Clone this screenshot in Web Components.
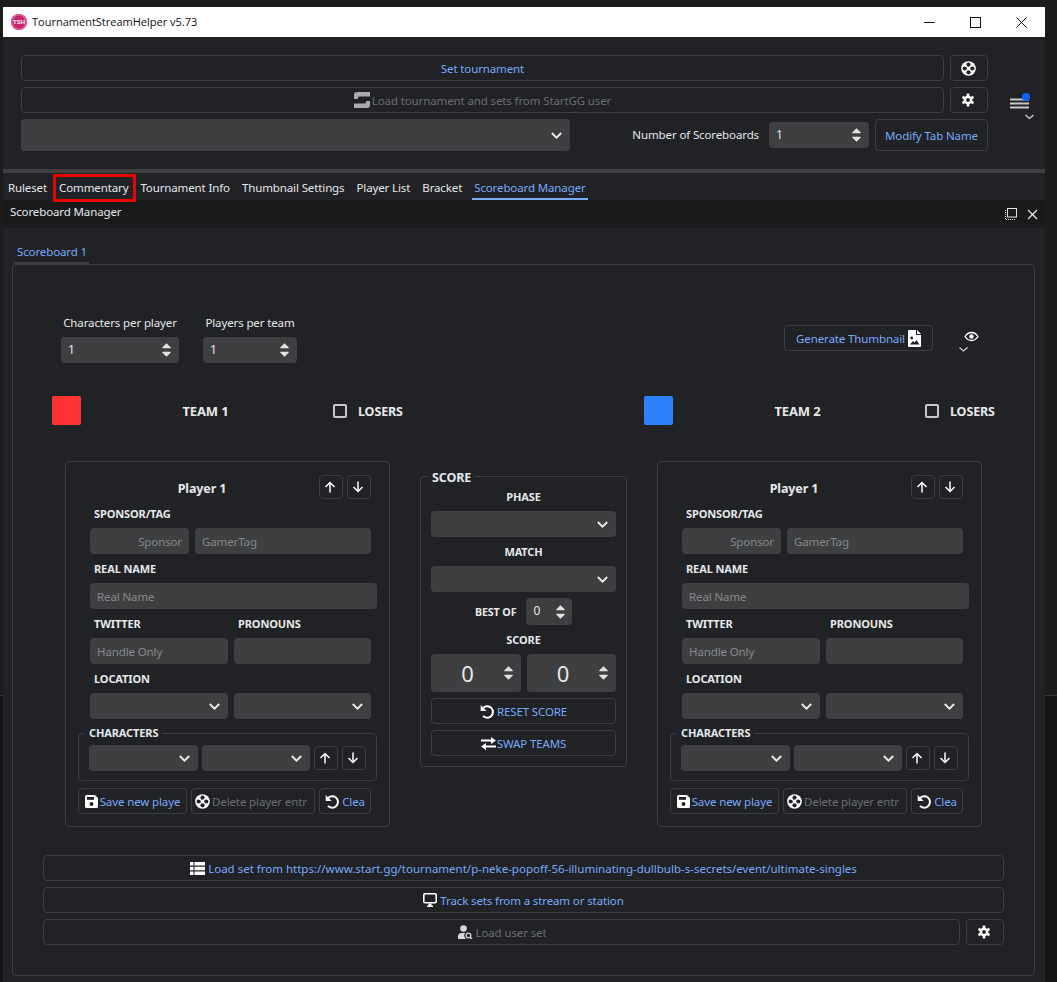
<!DOCTYPE html>
<html>
<head>
<meta charset="utf-8">
<title>TournamentStreamHelper</title>
<style>
    html, body { margin: 0; height: 100%; overflow: hidden; }
    body {
        background: linear-gradient(#1c1c1d 0 695px, #38383a 695px 696px, #141415 696px);
        font: 11.5px/1.2 "Noto Sans", "Liberation Sans", sans-serif;
        letter-spacing: -.12px;
        color: #e6e8ea;
    }
</style>
</head>
<body>
<tsh-window>
    <tsh-titlebar>TournamentStreamHelper v5.73</tsh-titlebar>
    <tsh-toolbar></tsh-toolbar>
    <tsh-tabs></tsh-tabs>
    <tsh-dock-title>Scoreboard Manager</tsh-dock-title>
    <tsh-scoreboard></tsh-scoreboard>
</tsh-window>

<script>
const BG = '#202226';

const ICONS = {
    ring: `<svg width="15" height="15" viewBox="0 0 15 15"><circle cx="7.500" cy="7.500" r="7.300" fill="#fff"/><g fill="${BG}"><circle cx="7.500" cy="3.700" r="2.100"/><circle cx="7.500" cy="11.300" r="2.100"/><circle cx="3.700" cy="7.500" r="2.100"/><circle cx="11.300" cy="7.500" r="2.100"/></g></svg>`,
    gear: `<svg width="14" height="14" viewBox="0 0 14 14"><path d="M7 .6v12.800M1.500 3.800l11 6.400M12.500 3.800l-11 6.400" stroke="#fff" stroke-width="2.600"/><circle cx="7" cy="7" r="4.400" fill="#fff"/><circle cx="7" cy="7" r="1.900" fill="${BG}"/></svg>`,
    startgg: `<svg width="16" height="16" viewBox="0 0 16 16" fill="#a9aaab"><path d="M0 7V3a3 3 0 0 1 3-3h13v4.500H5.500A1.500 1.500 0 0 0 4 6v1z"/><path d="M16 9v4a3 3 0 0 1-3 3H0v-4.500h10.500A1.500 1.500 0 0 0 12 10V9z"/></svg>`,
    save: `<svg width="13" height="13" viewBox="0 0 13 13"><path d="M1.500 0H10l3 3v8.500a1.500 1.500 0 0 1-1.500 1.500h-10A1.500 1.500 0 0 1 0 11.500v-10A1.500 1.500 0 0 1 1.500 0z" fill="#fff"/><rect x="2" y="2" width="7" height="2.800" fill="${BG}"/><circle cx="6.500" cy="9" r="2" fill="${BG}"/></svg>`,
    undo: `<svg width="15" height="15" viewBox="0 0 15 15"><path d="M3.400 3.800A5.700 5.700 0 1 1 3 11.800" fill="none" stroke="#fff" stroke-width="2"/><path d="M.7 1v6h6z" fill="#fff"/></svg>`,
    swap: `<svg width="15" height="13" viewBox="0 0 15 13" fill="#fff"><path d="M0 2.500h10V0l5 3.500L10 7V4.500H0z"/><path d="M15 8.500H5V6L0 9.500 5 13v-2.500h10z"/></svg>`,
    list: `<svg width="15" height="13" viewBox="0 0 15 13" fill="#fff"><path d="M0 0h3.500v3.500H0zM4.500 0H15v3.500H4.500zM0 4.700h3.500v3.500H0zM4.500 4.700H15v3.500H4.500zM0 9.400h3.500v3.500H0zM4.500 9.400H15v3.500H4.500z"/></svg>`,
    desktop: `<svg width="14" height="14" viewBox="0 0 14 14"><rect x=".8" y=".8" width="12.400" height="9" rx="1" fill="none" stroke="#fff" stroke-width="1.600"/><path d="M5.500 10.500h3v2h1.500V14H4v-1.500h1.500z" fill="#fff"/></svg>`,
    usersearch: `<svg width="16" height="14" viewBox="0 0 16 14" fill="#d8d8d8"><circle cx="6.500" cy="3.500" r="3.300"/><path d="M1 14v-2.500A3.500 3.500 0 0 1 4.500 8H8a5 5 0 0 0 1 6z"/><circle cx="11.500" cy="10.500" r="2.300" fill="none" stroke="#d8d8d8" stroke-width="1.300"/><path d="M13 12l2 2" stroke="#d8d8d8" stroke-width="1.500"/></svg>`,
    fileimage: `<svg width="13" height="17" viewBox="0 0 13 17"><path d="M1 0h7v5h5v11a1 1 0 0 1-1 1H1a1 1 0 0 1-1-1V1a1 1 0 0 1 1-1zM9 0l4 4H9z" fill="#fff"/><circle cx="3.700" cy="8" r="1.400" fill="${BG}"/><path d="M2 14.500l3-3.500 1.500 1.500 2-2.500 3 4.500z" fill="${BG}"/></svg>`,
    up: `<svg width="12" height="12" viewBox="0 0 12 12" fill="none" stroke="#fff" stroke-width="1.500"><path d="M6 11.500V1.500M1.500 6L6 1.500 10.500 6"/></svg>`,
    down: `<svg width="12" height="12" viewBox="0 0 12 12" fill="none" stroke="#fff" stroke-width="1.500"><path d="M6 .5v10M1.500 6L6 10.500 10.500 6"/></svg>`
};

class TshElement extends HTMLElement{

    constructor(){
        super();
        this.$ = this.attachShadow({mode: 'open'});
        this.$.innerHTML = `<style>${this.css()}</style>${this.html()}`;
    }

    attr(name, fallback = ''){
        return this.hasAttribute(name) ? this.getAttribute(name) : fallback;
    }

    css(){ return ':host{display:block}' }
    html(){ return '<slot></slot>' }
}

// inputs and buttons share the same sizing through --w / --h on the host

class TshButton extends TshElement{
    css(){
        return `
            :host{
                display:flex;
                align-items:center;
                justify-content:center;
                gap:var(--gap, 2px);
                box-sizing:border-box;
                width:var(--w, auto);
                height:var(--h, 26px);
                flex:none;
                border:1px solid #3c3e42;
                border-radius:4px;
                color:#7aa9f9;
                overflow:hidden;
                white-space:nowrap;
                padding:var(--pad, 0);
            }
            :host([disabled]){ color:#6b6c6f; }
            svg{ flex:none; display:block; }
            span{ overflow:hidden; padding-top:1px; line-height:18px; }
        `;
    }
    html(){
        const icon = ICONS[this.attr('icon')] || '';
        return this.hasAttribute('after')
            ? `<span><slot></slot></span>${icon}`
            : `${icon}<span><slot></slot></span>`;
    }
}
customElements.define('tsh-button', TshButton);

class TshInput extends TshElement{
    css(){
        return `
            :host{
                display:flex;
                align-items:center;
                box-sizing:border-box;
                width:var(--w, auto);
                height:26px;
                flex:none;
                padding:1px 7px 0;
                border-radius:4px;
                background:#3e3f41;
                color:#86888a;
                font-weight:400;
                overflow:hidden;
                white-space:nowrap;
            }
            :host([end]){ justify-content:flex-end; }
        `;
    }
}
customElements.define('tsh-input', TshInput);

class TshCombo extends TshElement{
    css(){
        return `
            :host{
                display:flex;
                align-items:center;
                justify-content:flex-end;
                box-sizing:border-box;
                width:var(--w, auto);
                height:var(--h, 26px);
                flex:none;
                padding-right:8px;
                border-radius:4px;
                background:#3e3f41;
            }
            svg{ display:block; }
        `;
    }
    html(){
        return `<svg width="11" height="7" viewBox="0 0 11 7" fill="none" stroke="#ececec" stroke-width="1.800"><path d="M.8 1l4.700 4.700L10.200 1"/></svg>`;
    }
}
customElements.define('tsh-combo', TshCombo);

class TshSpin extends TshElement{
    css(){
        return `
            :host{
                display:flex;
                align-items:center;
                box-sizing:border-box;
                width:var(--w, auto);
                height:var(--h, 26px);
                flex:none;
                padding:0 7px;
                border-radius:4px;
                background:#3e3f41;
                color:#e6e8ea;
                font-weight:400;
                font-size:var(--size, 12px);
            }
            .value{ flex:1; text-align:var(--align, left); padding-right:var(--value-right, 0); }
            svg{ display:block; flex:none; margin-right:var(--arrow-right, 1px); }
        `;
    }
    html(){
        return `<div class="value"><slot></slot></div>
            <svg width="9" height="14" viewBox="0 0 10 15" fill="#e2e2e2"><path d="M5 0l4.500 4.500a.5.5 0 0 1-.4 1H.9a.5.5 0 0 1-.4-1z"/><path d="M5 15l4.500-4.500a.5.5 0 0 0-.4-1H.9a.5.5 0 0 0-.4 1z"/></svg>`;
    }
}
customElements.define('tsh-spin', TshSpin);

class TshGroup extends TshElement{
    css(){
        return `
            :host{
                display:block;
                position:relative;
                box-sizing:border-box;
                border:1px solid #3c3e42;
                border-radius:4px;
            }
            .legend{
                position:absolute;
                left:var(--legend-left, 6px);
                top:var(--legend-top, -1px);
                transform:translateY(-50%);
                padding:0 4px;
                background:${BG};
                font-weight:700;
                font-size:var(--legend-size, 11px);
            }
        `;
    }
    html(){
        return `<div class="legend">${this.attr('legend')}</div><slot></slot>`;
    }
}
customElements.define('tsh-group', TshGroup);

class TshTitlebar extends TshElement{
    css(){
        return `
            :host{
                display:flex;
                align-items:center;
                height:30px;
                padding-right:1px;
                background:#fff;
                color:#111;
                font-family:"Open Sans", "Noto Sans", sans-serif;
                font-size:11px;
                letter-spacing:0;
            }
            .logo{
                box-sizing:border-box;
                width:16px;
                height:16px;
                margin:0 5px 0 8px;
                border-radius:50%;
                background:#c9256f;
                box-shadow:inset 0 0 0 1.500px #de5f97;
                color:#fff;
                font:700 6px/16px "Liberation Sans", sans-serif;
                text-align:center;
                overflow:hidden;
            }
            .text{ flex:1; }
            .ctl{ width:46px; height:30px; display:flex; align-items:center; justify-content:center; }
        `;
    }
    html(){
        return `
            <div class="logo">TSH</div>
            <div class="text"><slot></slot></div>
            <div class="ctl"><svg width="11" height="11" viewBox="0 0 11 11"><path d="M0 5.500h10.500" stroke="#111"/></svg></div>
            <div class="ctl"><svg width="11" height="11" viewBox="0 0 11 11"><rect x=".5" y=".5" width="10" height="10" fill="none" stroke="#111"/></svg></div>
            <div class="ctl"><svg width="11" height="11" viewBox="0 0 11 11"><path d="M.5.5l10 10M10.500.5l-10 10" stroke="#111"/></svg></div>
        `;
    }
}
customElements.define('tsh-titlebar', TshTitlebar);

class TshToolbar extends TshElement{
    css(){
        return `
            :host{
                display:grid;
                grid-template-columns:967px auto;
                box-sizing:border-box;
                height:136px;
                padding:18px 0 0 18px;
                border-bottom:4px solid #3f4042;
            }
            .rows{ display:grid; grid-template-columns:923px 38px; gap:6px; grid-auto-rows:26px; }
            .last{
                grid-column:1 / 3;
                display:flex;
                align-items:center;
                height:32px;
            }
            .label{ margin-left:auto; margin-right:10px; }
            .menu{ margin:37px 0 0 18px; display:block; }
        `;
    }
    html(){
        return `
            <div class="rows">
                <tsh-button>Set tournament</tsh-button>
                <tsh-button icon="ring"></tsh-button>
                <tsh-button disabled icon="startgg">Load tournament and sets from StartGG user</tsh-button>
                <tsh-button icon="gear"></tsh-button>
                <div class="last">
                    <tsh-combo style="--w:549px;--h:32px"></tsh-combo>
                    <span class="label">Number of Scoreboards</span>
                    <tsh-spin style="--w:100px">1</tsh-spin>
                    <tsh-button style="--w:113px;--h:32px;margin-left:6px">Modify Tab Name</tsh-button>
                </div>
            </div>
            <svg class="menu" width="32" height="32" viewBox="0 0 32 32">
                <path d="M4 7.500h19M4 11.500h19M4 15.500h19" stroke="#c9c9c9" stroke-width="2.200"/>
                <circle cx="20" cy="5" r="4" fill="#0d62ff"/>
                <path d="M19.500 23l4 3.500 4-3.500" fill="none" stroke="#cfcfcf" stroke-width="1.300"/>
            </svg>
        `;
    }
}
customElements.define('tsh-toolbar', TshToolbar);

class TshTabs extends TshElement{
    css(){
        return `
            :host{
                display:flex;
                gap:7px;
                box-sizing:border-box;
                height:27px;
                padding-left:2.500px;
                white-space:nowrap;
            }
            .tab{
                display:flex;
                align-items:center;
                box-sizing:border-box;
                padding:3px 2.500px 0;
                height:27px;
            }
            .on{ color:#7aa9f9; border-bottom:2px solid #7aa9f9; padding-top:5px; }
            .mark{ position:relative; }
            .mark::after{
                content:'';
                position:absolute;
                left:-4px; right:-5px; top:1px; bottom:-2px;
                border:3px solid #f00000;
                border-radius:1px;
                box-sizing:border-box;
            }
        `;
    }
    html(){
        return `
            <div class="tab">Ruleset</div>
            <div class="tab mark">Commentary</div>
            <div class="tab">Tournament Info</div>
            <div class="tab">Thumbnail Settings</div>
            <div class="tab">Player List</div>
            <div class="tab">Bracket</div>
            <div class="tab on">Scoreboard Manager</div>
        `;
    }
}
customElements.define('tsh-tabs', TshTabs);

class TshDockTitle extends TshElement{
    css(){
        return `
            :host{
                display:flex;
                align-items:center;
                justify-content:space-between;
                height:28px;
                padding:0 7px 0 7px;
                box-sizing:border-box;
                background:#191a1c;
                margin-top:0;
            }
            .text{ margin-top:-4px; }
            .btns{ display:flex; gap:10px; align-items:center; }
            svg{ display:block; }
        `;
    }
    html(){
        return `
            <div class="text"><slot></slot></div>
            <div class="btns">
                <svg width="12" height="12" viewBox="0 0 12 12" fill="none" stroke="#e2e2e2"><rect x="2.500" y=".5" width="9" height="8.500"/><path d="M.5 2v9.500H10" stroke-dasharray="1 1"/></svg>
                <svg width="11" height="11" viewBox="0 0 11 11" fill="none" stroke="#e6e6e6" stroke-width="1.200"><path d="M1 1l9 9M10 1l-9 9"/></svg>
            </div>
        `;
    }
}
customElements.define('tsh-dock-title', TshDockTitle);

class TshTeamHeader extends TshElement{
    css(){
        return `
            :host{
                display:flex;
                flex:none;
                align-items:center;
                width:592px;
                height:29px;
                font-weight:700;
                font-size:13px;
            }
            .swatch{ width:29px; height:29px; border-radius:2px; background:var(--team); }
            .name{ width:249px; text-align:center; padding:2px 0 0 0; box-sizing:border-box; }
            .check{ width:14px; height:14px; box-sizing:border-box; border:2px solid #c9c9c9; border-radius:2px; margin:0 11px 0 3px; }
            .losers{ padding-top:2px; font-size:12.500px; }
        `;
    }
    html(){
        return `
            <div class="swatch"></div>
            <div class="name">${this.attr('name')}</div>
            <div class="check"></div>
            <div class="losers">LOSERS</div>
        `;
    }
}
customElements.define('tsh-team-header', TshTeamHeader);

class TshPlayerCard extends TshElement{
    css(){
        return `
            :host{
                display:flex;
                flex-direction:column;
                flex:none;
                box-sizing:border-box;
                width:325px;
                height:366px;
                padding:13px 12px 0;
                border:1px solid #3c3e42;
                border-radius:4px;
            }
            .head{ display:flex; gap:4px; height:24px; }
            .title{ width:226px; padding-left:11px; font-weight:700; font-size:12.500px; text-align:center; line-height:28px; }
            .label{ display:flex; align-items:center; height:29px; padding-left:16px; font-weight:700; font-size:11px; }
            .pair{ display:grid; grid-template-columns:138px 137px; gap:0 6px; margin-left:12px; width:281px; }
            .pair .label{ padding-left:4px; }
            .row{ display:flex; gap:6px; margin-left:12px; }
            tsh-group{ margin-top:14px; height:48px; }
            .chars{ display:flex; gap:4px; padding:11px 0 0 10px; align-items:center; }
            .foot{ display:flex; gap:4px; margin-top:7px; }
        `;
    }
    html(){
        return `
            <div class="head">
                <div class="title">${this.attr('name')}</div>
                <tsh-button icon="up" style="--w:24px;--h:24px"></tsh-button>
                <tsh-button icon="down" style="--w:24px;--h:24px"></tsh-button>
            </div>
            <div class="label">SPONSOR/TAG</div>
            <div class="row">
                <tsh-input end style="--w:99px">Sponsor</tsh-input>
                <tsh-input style="--w:176px">GamerTag</tsh-input>
            </div>
            <div class="label">REAL NAME</div>
            <div class="row"><tsh-input style="--w:287px">Real Name</tsh-input></div>
            <div class="pair">
                <div class="label">TWITTER</div>
                <div class="label">PRONOUNS</div>
                <tsh-input>Handle Only</tsh-input>
                <tsh-input></tsh-input>
            </div>
            <div class="label">LOCATION</div>
            <div class="row">
                <tsh-combo style="--w:138px"></tsh-combo>
                <tsh-combo style="--w:137px"></tsh-combo>
            </div>
            <tsh-group legend="CHARACTERS">
                <div class="chars">
                    <tsh-combo style="--w:109px"></tsh-combo>
                    <tsh-combo style="--w:108px"></tsh-combo>
                    <tsh-button icon="up" style="--w:24px;--h:24px"></tsh-button>
                    <tsh-button icon="down" style="--w:24px;--h:24px"></tsh-button>
                </div>
            </tsh-group>
            <div class="foot">
                <tsh-button icon="save" style="--w:109px;--gap:2px">Save new playe</tsh-button>
                <tsh-button icon="ring" disabled style="--w:124px;--gap:2px;justify-content:flex-start;--pad:0 0 0 3px">Delete player entr</tsh-button>
                <tsh-button icon="undo" style="--w:52px">Clea</tsh-button>
            </div>
        `;
    }
}
customElements.define('tsh-player-card', TshPlayerCard);

class TshScorePanel extends TshElement{
    css(){
        return `
            :host{
                display:block;
                flex:none;
                width:207px;
                height:291px;
                margin-top:15px;
                --legend-left:7px;
                --legend-size:12.500px;
                --legend-top:0;
            }
            tsh-group{ height:291px; }
            .in{ display:flex; flex-direction:column; padding:6px 10px 0; }
            .label{ height:29px; line-height:29px; text-align:center; font-weight:700; font-size:11px; }
            .label.first{ height:28px; line-height:28px; }
            .best{ display:flex; align-items:center; gap:10px; padding-left:44px; margin-top:6px; font-weight:700; font-size:10.700px; }
            .best span{ padding-top:2px; }
            .scores{ display:flex; gap:6px; --value-right:7px; }
            tsh-button{ margin-top:6px; }
        `;
    }
    html(){
        return `
            <tsh-group legend="SCORE">
                <div class="in">
                    <div class="label first">PHASE</div>
                    <tsh-combo></tsh-combo>
                    <div class="label">MATCH</div>
                    <tsh-combo></tsh-combo>
                    <div class="best">
                        <span>BEST OF</span>
                        <tsh-spin style="--w:46px;--h:27px;--arrow-right:0">0</tsh-spin>
                    </div>
                    <div class="label">SCORE</div>
                    <div class="scores">
                        <tsh-spin style="--w:90px;--h:38px;--size:22px;--align:center;--arrow-right:1px">0</tsh-spin>
                        <tsh-spin style="--w:89px;--h:38px;--size:22px;--align:center;--arrow-right:1px">0</tsh-spin>
                    </div>
                    <tsh-button icon="undo">RESET SCORE</tsh-button>
                    <tsh-button icon="swap" style="--gap:1px">SWAP TEAMS</tsh-button>
                </div>
            </tsh-group>
        `;
    }
}
customElements.define('tsh-score-panel', TshScorePanel);

class TshScoreboard extends TshElement{
    css(){
        return `
            :host{ display:block; padding:12px 0 0 9px; }
            .tabname{
                box-sizing:border-box;
                width:75px;
                height:24px;
                margin-left:2px;
                padding:5px 0 0 3px;
                color:#7aa9f9;
                border-bottom:2px solid #3f4042;
                white-space:nowrap;
            }
            .box{
                box-sizing:border-box;
                width:1023px;
                height:712px;
                margin-top:0;
                padding-top:51px;
                border:1px solid #3c3e42;
                border-radius:4px;
            }
            .settings{ display:flex; height:47px; padding-left:48px; }
            .setting{ display:flex; flex-direction:column; justify-content:space-between; }
            .setting + .setting{ margin-left:24px; }
            .setting span{ text-align:center; line-height:14px; }
            .thumb{ margin:9px 0 0 auto; }
            .eye{ display:block; margin:13px 53px 0 24px; }
            .teams{ display:flex; margin-top:33px; padding-left:39px; }
            .columns{ display:flex; gap:30px; margin-top:36px; padding-left:52px; align-items:flex-start; }
            .actions{ display:flex; flex-direction:column; gap:6px; margin:28px 0 0 30px; width:961px; }
            .userrow{ display:flex; gap:6px; }
            .url{ letter-spacing:0; }
        `;
    }
    html(){
        return `
            <div class="tabname">Scoreboard 1</div>
            <div class="box">
                <div class="settings">
                    <div class="setting">
                        <span>Characters per player</span>
                        <tsh-spin style="--w:118px">1</tsh-spin>
                    </div>
                    <div class="setting">
                        <span>Players per team</span>
                        <tsh-spin style="--w:94px">1</tsh-spin>
                    </div>
                    <tsh-button class="thumb" icon="fileimage" after style="--w:149px;--gap:3px">Generate Thumbnail</tsh-button>
                    <svg class="eye" width="24" height="24" viewBox="0 0 24 24" fill="none" stroke="#fff">
                        <path d="M8 7.500C10 4.500 12 3.500 14.500 3.500S19 4.500 21 7.500C19 10.500 17 11.500 14.500 11.500S10 10.500 8 7.500z" stroke-width="1.300"/>
                        <circle cx="14.500" cy="7.500" r="2.200" fill="#fff" stroke="none"/>
                        <path d="M2.500 18.500l4 3.500 4-3.500" stroke="#cfcfcf" stroke-width="1.300"/>
                    </svg>
                </div>
                <div class="teams">
                    <tsh-team-header name="TEAM 1" style="--team:#ff3333"></tsh-team-header>
                    <tsh-team-header name="TEAM 2" style="--team:#2f80ff"></tsh-team-header>
                </div>
                <div class="columns">
                    <tsh-player-card name="Player 1"></tsh-player-card>
                    <tsh-score-panel></tsh-score-panel>
                    <tsh-player-card name="Player 1"></tsh-player-card>
                </div>
                <div class="actions">
                    <tsh-button class="url" icon="list" style="--gap:3px">Load set from https://www.start.gg/tournament/p-neke-popoff-56-illuminating-dullbulb-s-secrets/event/ultimate-singles</tsh-button>
                    <tsh-button icon="desktop" style="--gap:3px">Track sets from a stream or station</tsh-button>
                    <div class="userrow">
                        <tsh-button icon="usersearch" disabled style="--w:917px;--gap:3px">Load user set</tsh-button>
                        <tsh-button icon="gear" style="--w:38px"></tsh-button>
                    </div>
                </div>
            </div>
        `;
    }
}
customElements.define('tsh-scoreboard', TshScoreboard);

class TshWindow extends TshElement{
    css(){
        return `
            :host{
                display:block;
                box-sizing:border-box;
                width:1042px;
                height:975px;
                margin:7px 0 0 3px;
                background:${BG};
                overflow:hidden;
            }
        `;
    }
}
customElements.define('tsh-window', TshWindow);
</script>
</body>
</html>
